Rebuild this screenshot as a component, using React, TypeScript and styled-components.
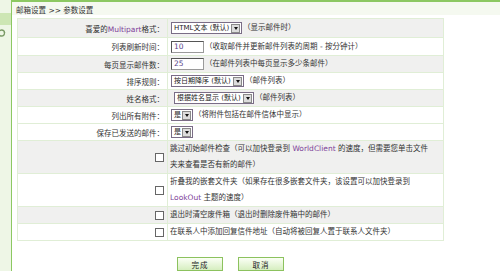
import React from 'react';
import styled, { createGlobalStyle } from 'styled-components';

const FONT = '"DejaVu Sans", "Noto Sans CJK SC", sans-serif';

const GlobalStyle = createGlobalStyle`
  html, body {
    margin: 0;
    padding: 0;
    background: #fff;
  }
  body {
    width: 500px;
    height: 271px;
    overflow: hidden;
    font-family: ${FONT};
    font-size: 7.5px;
    color: #333;
  }
`;

const Page = styled.div`
  display: flex;
  width: 500px;
  height: 271px;
`;

const Sidebar = styled.aside`
  width: 11px;
  flex: none;
  background: #eef6e6;
  border-right: 1px solid #8cc862;
  display: flex;
  flex-direction: column;
  padding-top: 13px;
  overflow: hidden;
`;

const SideTab = styled.div`
  height: 12px;
  background: #cde6b4;
`;

const SideIcon = styled.svg`
  display: block;
  margin-top: 3px;
`;

const Main = styled.main`
  flex: 1;
  border-top: 2px solid #8cc862;
  display: flex;
  flex-direction: column;
`;

const Header = styled.header`
  height: 23px;
  background: #f5f9f0;
  display: flex;
  align-items: center;
  padding: 1px 0 0 4px;
  box-sizing: border-box;
  color: #333;
`;

const Content = styled.section`
  padding: 3px 0 0 5px;
`;

const Table = styled.table`
  width: 427px;
  border-collapse: collapse;
  border: 1px solid #e0eed6;
`;

const Row = styled.tr<{ $shade?: boolean; $h: number }>`
  background: ${(p) => (p.$shade ? '#f0f0ef' : '#fff')};
  height: ${(p) => p.$h}px;
  border-bottom: 1px solid #e0eed6;
`;

const LabelCell = styled.td`
  width: 146px;
  text-align: right;
  padding: 0 3px 0 0;
  border-right: 1px solid #e0eed6;
  white-space: nowrap;
  vertical-align: middle;
`;

const ValueCell = styled.td<{ $pad?: number }>`
  padding: 0 0 0 ${(p) => p.$pad ?? 3}px;
  vertical-align: middle;
  line-height: 16px;
  white-space: nowrap;
`;

const Line = styled.div`
  display: flex;
  align-items: center;
`;

const Accent = styled.span`
  color: #7e3f99;
`;

const SelectBox = styled.span<{ $w: number; $indent?: number }>`
  display: inline-flex;
  align-items: center;
  width: ${(p) => p.$w}px;
  height: 12px;
  box-sizing: border-box;
  margin-left: ${(p) => p.$indent ?? 0}px;
  border: 1px solid #7a6d86;
  background: #fff;
  flex: none;
`;

const SelectText = styled.span`
  flex: 1;
  min-width: 0;
  padding-left: 2px;
  font-size: 7px;
  line-height: 10px;
  color: #222;
  white-space: nowrap;
`;

const SelectArrow = styled.span`
  width: 9px;
  height: 9px;
  margin-right: 1px;
  box-sizing: border-box;
  flex: none;
  border: 1px solid #8a8a8a;
  background: #dcdcdc;
  display: flex;
  align-items: center;
  justify-content: center;

  &::after {
    content: '';
    border-left: 2.5px solid transparent;
    border-right: 2.5px solid transparent;
    border-top: 3px solid #111;
  }
`;

const TextBox = styled.input`
  width: 33px;
  height: 12px;
  box-sizing: border-box;
  border: 1px solid #9a9a9a;
  border-top-color: #555;
  border-left-color: #555;
  padding: 0 0 0 2px;
  font: inherit;
  color: #5a3f8a;
  flex: none;
`;

const Note = styled.span`
  margin-left: 1px;
`;

const Check = styled.input`
  appearance: none;
  width: 9px;
  height: 9px;
  margin: 0;
  border: 1px solid #666;
  background: #fff;
  vertical-align: middle;
`;

const Footer = styled.div`
  display: flex;
  justify-content: center;
  gap: 15px;
  width: 427px;
  margin-top: 16px;
`;

const Button = styled.button`
  width: 46px;
  height: 14px;
  padding: 0;
  border: 1px solid #8cc25e;
  background: linear-gradient(#fbfff6, #d6eec0);
  font: inherit;
  color: #222;
  letter-spacing: 1px;
`;

const Select = ({ text, w, indent }: { text: string; w: number; indent?: number }) => (
  <SelectBox $w={w} $indent={indent}>
    <SelectText>{text}</SelectText>
    <SelectArrow />
  </SelectBox>
);

type Setting = {
  label: React.ReactNode;
  control: React.ReactNode;
  note?: string;
  shade?: boolean;
  h: number;
};

const settings: Setting[] = [
  {
    label: <>喜爱的<Accent>Multipart</Accent>格式：</>,
    control: <Select text="HTML文本 (默认)" w={71} />,
    note: '（显示邮件时）',
    shade: true,
    h: 19,
  },
  {
    label: '列表刷新时间：',
    control: <TextBox defaultValue="10" />,
    note: '（收取邮件并更新邮件列表的周期 - 按分钟计）',
    h: 18,
  },
  {
    label: '每页显示邮件数：',
    control: <TextBox defaultValue="25" />,
    note: '（在邮件列表中每页显示多少条邮件）',
    shade: true,
    h: 17,
  },
  {
    label: '排序规则：',
    control: <Select text="按日期降序 (默认)" w={73} />,
    note: '（邮件列表）',
    h: 17,
  },
  {
    label: '姓名格式：',
    control: <Select text="根据姓名显示 (默认)" w={80} indent={3} />,
    note: '（邮件列表）',
    shade: true,
    h: 17,
  },
  {
    label: '列出所有附件：',
    control: <Select text="是" w={22} />,
    note: '（将附件包括在邮件信体中显示）',
    h: 16,
  },
  {
    label: '保存已发送的邮件：',
    control: <Select text="是" w={22} />,
    h: 17,
  },
];

const options: { text: React.ReactNode; shade?: boolean; h: number }[] = [
  {
    text: (
      <>
        跳过初始邮件检查（可以加快登录到 <Accent>WorldClient</Accent> 的速度，但需要您单击文件
        <br />
        夹来查看是否有新的邮件）
      </>
    ),
    shade: true,
    h: 33,
  },
  {
    text: (
      <>
        折叠我的嵌套文件夹（如果存在很多嵌套文件夹，该设置可以加快登录到
        <br />
        <Accent>LookOut</Accent> 主题的速度）
      </>
    ),
    h: 33,
  },
  { text: '退出时清空废件箱（退出时删除废件箱中的邮件）', shade: true, h: 16 },
  { text: '在联系人中添加回复信件地址（自动将被回复人置于联系人文件夹）', h: 17 },
];

export default function App() {
  return (
    <>
      <GlobalStyle />
      <Page>
        <Sidebar>
          <SideTab />
          <SideIcon width="11" height="10" viewBox="0 0 11 10">
            <circle cx="1.5" cy="5" r="3" fill="none" stroke="#7a9a66" strokeWidth="1.3" />
            <path d="M4.5 3.5 L5.5 5 L3.5 5 Z" fill="#7a9a66" />
          </SideIcon>
        </Sidebar>
        <Main>
          <Header>邮箱设置 &gt;&gt; 参数设置</Header>
          <Content>
            <Table>
              <tbody>
                {settings.map((s, i) => (
                  <Row key={i} $shade={s.shade} $h={s.h}>
                    <LabelCell>{s.label}</LabelCell>
                    <ValueCell>
                      <Line>
                        {s.control}
                        {s.note && <Note>{s.note}</Note>}
                      </Line>
                    </ValueCell>
                  </Row>
                ))}
                {options.map((o, i) => (
                  <Row key={'o' + i} $shade={o.shade} $h={o.h}>
                    <LabelCell>
                      <Check type="checkbox" />
                    </LabelCell>
                    <ValueCell $pad={2}>{o.text}</ValueCell>
                  </Row>
                ))}
              </tbody>
            </Table>
            <Footer>
              <Button type="button">完成</Button>
              <Button type="button">取消</Button>
            </Footer>
          </Content>
        </Main>
      </Page>
    </>
  );
}
